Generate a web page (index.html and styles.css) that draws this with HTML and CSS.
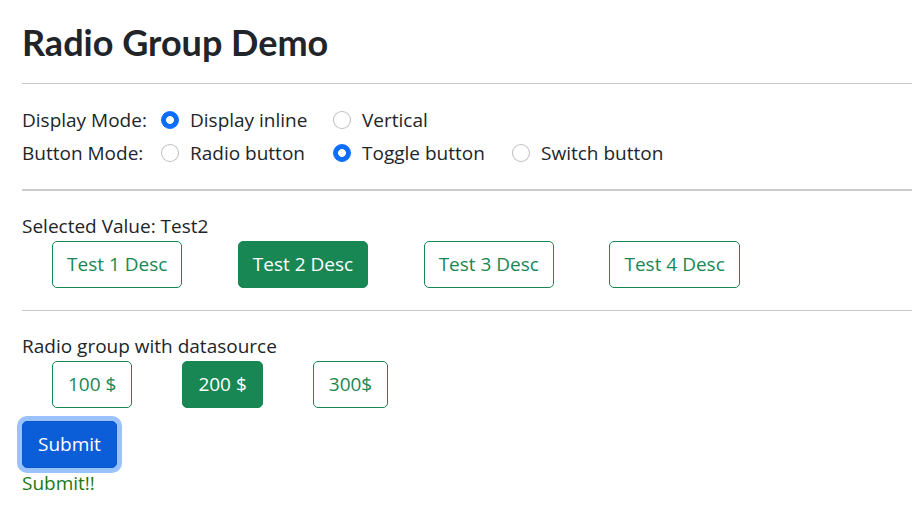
FILE: index.html
```html
<!DOCTYPE html>
<html lang="en">
<head>
<meta charset="utf-8">
<title>Radio Group Demo</title>
<link rel="stylesheet" href="styles.css">
</head>
<body>
<main class="page">
  <h1 class="title">Radio Group Demo</h1>
  <hr class="rule">
  <div class="modes">
    <span class="mode-label">Display Mode:</span>
    <label class="opt"><input type="radio" name="display" checked><span>Display inline</span></label>
    <label class="opt"><input type="radio" name="display"><span>Vertical</span></label>
    <span></span>

    <span class="mode-label">Button Mode:</span>
    <label class="opt"><input type="radio" name="btnmode"><span>Radio button</span></label>
    <label class="opt"><input type="radio" name="btnmode" checked><span>Toggle button</span></label>
    <label class="opt"><input type="radio" name="btnmode"><span>Switch button</span></label>
  </div>
  <hr class="rule rule-thick">
  <div class="text-line">Selected Value: Test2</div>
  <div class="btn-row btn-row-wide">
    <button class="btn btn-outline">Test 1 Desc</button>
    <button class="btn btn-active">Test 2 Desc</button>
    <button class="btn btn-outline">Test 3 Desc</button>
    <button class="btn btn-outline">Test 4 Desc</button>
  </div>
  <hr class="rule rule-low">
  <div class="text-line">Radio group with datasource</div>
  <div class="btn-row btn-row-narrow">
    <button class="btn btn-outline">100 $</button>
    <button class="btn btn-active">200 $</button>
    <button class="btn btn-outline">300$</button>
  </div>
  <button class="btn btn-primary">Submit</button>
  <div class="text-line result">Submit!!</div>
</main>
</body>
</html>
```
FILE: styles.css
```css
html, body {
  margin: 0;
  padding: 0;
  background: #fff;
}
body {
  font-family: "Open Sans", "Noto Sans", sans-serif;
  font-size: 19px;
  line-height: 30px;
  color: #212529;
}
.page {
  padding: 21px 0 0 22px;
}
.title {
  margin: 0 0 19px;
  font-family: Lato, "Open Sans", sans-serif;
  font-size: 36px;
  line-height: 43px;
  font-weight: 700;
  color: #212529;
}
.rule {
  border: 0;
  height: 1px;
  background: #c8c9ca;
  margin: 0 0 21px;
}
.rule-thick {
  height: 2px;
  margin: 21px 0 20px;
  background: #cbcbcb;
}
.rule-low {
  margin: 22px 0 20px;
}
.modes {
  display: grid;
  grid-template-columns: 139px 172px 179px auto;
  grid-auto-rows: 30px;
  row-gap: 3px;
}
.mode-label {
  white-space: nowrap;
}
.opt {
  display: flex;
  align-items: center;
  white-space: nowrap;
}
.opt input {
  appearance: none;
  -webkit-appearance: none;
  margin: 0 11px 0 0;
  width: 18px;
  height: 18px;
  border-radius: 50%;
  border: 1px solid rgba(0, 0, 0, 0.25);
  background: #fff;
  box-sizing: border-box;
  flex: none;
}
.opt input:checked {
  border-color: #0d6efd;
  background: radial-gradient(circle, #fff 0 3.6px, #0d6efd 4.2px);
}
.text-line {
  height: 30px;
}
.btn-row {
  display: flex;
  padding-left: 30px;
}
.btn-row-wide {
  gap: 55.5px;
}
.btn-row-wide .btn {
  padding: 0 14px;
}
.btn-row-narrow {
  gap: 50px;
}
.btn {
  font-family: "Open Sans", "Noto Sans", sans-serif;
  font-size: 19px;
  height: 47px;
  line-height: 45px;
  padding: 0 15px;
  border-radius: 5px;
  border: 1px solid #198754;
  box-sizing: border-box;
  background: #fff;
  color: #198754;
  cursor: pointer;
}
.btn-active {
  background: #198754;
  color: #fff;
}
.btn-primary {
  display: block;
  margin-top: 13px;
  background: #0b5ed7;
  border-color: #0a58ca;
  color: #fff;
  box-shadow: 0 0 0 5px rgba(13, 110, 253, 0.42);
}
.result {
  color: #1b7a12;
}
```
